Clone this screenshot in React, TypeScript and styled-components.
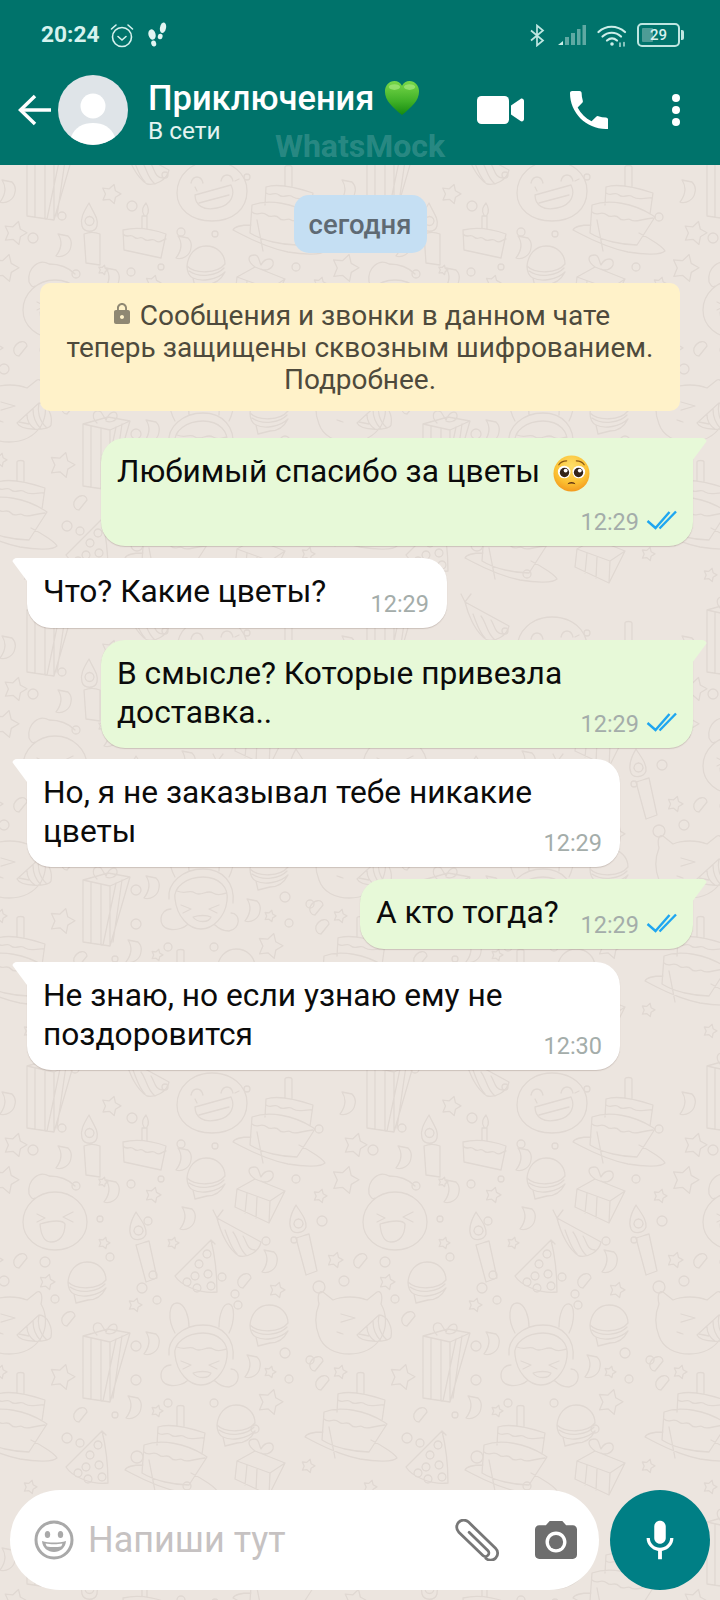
import { Fragment } from 'react';
import styled, { createGlobalStyle } from 'styled-components';

const GlobalStyle = createGlobalStyle`
  html, body {
    margin: 0;
    padding: 0;
    background: #ece5df;
  }
  body {
    font-family: Roboto, "Liberation Sans", sans-serif;
  }
`;

const Screen = styled.div`
  width: 720px;
  height: 1600px;
  display: flex;
  flex-direction: column;
  overflow: hidden;
`;

const Header = styled.header`
  position: relative;
  height: 165px;
  flex: none;
  background: #00736b;
  color: #fff;
`;

const StatusBar = styled.div`
  height: 70px;
  display: flex;
  align-items: center;
  padding: 0 40px 0 41px;
  color: #d6f2ee;
`;

const Clock = styled.span`
  font-size: 22.700px;
  font-weight: 700;
  line-height: 1;
  margin-right: 11px;
`;

const StatusRight = styled.div`
  margin-left: auto;
  display: flex;
  align-items: center;
  gap: 11px;
`;

const NavBar = styled.div`
  height: 80px;
  display: flex;
  align-items: center;
  padding-left: 18px;
`;

const Titles = styled.div`
  margin-left: 20px;
  display: flex;
  flex-direction: column;
  margin-top: 3px;
`;

const Title = styled.div`
  font-size: 34.500px;
  font-weight: 500;
  line-height: 38px;
  white-space: nowrap;
  display: flex;
  align-items: center;
  gap: 10px;
`;

const Subtitle = styled.div`
  font-size: 24.400px;
  line-height: 28px;
  color: #e4f3f1;
`;

const NavActions = styled.div`
  margin-left: auto;
  display: flex;
  align-items: center;
  padding-right: 40px;
  gap: 46px;
`;

const Dots = styled.div`
  display: flex;
  flex-direction: column;
  gap: 4px;
  margin-left: 18px;

  i {
    display: block;
    width: 8px;
    height: 8px;
    border-radius: 50%;
    background: #fff;
  }
`;

const Watermark = styled.div`
  position: absolute;
  left: 50%;
  top: 128px;
  transform: translateX(-50%);
  font-size: 32px;
  font-weight: 700;
  line-height: 36px;
  color: rgba(255, 255, 255, 0.18);
  white-space: nowrap;
`;

const Chat = styled.main`
  position: relative;
  flex: 1;
  display: flex;
  flex-direction: column;
  background: #ece5df;
`;

const Wallpaper = styled.svg`
  position: absolute;
  inset: 0;
  width: 100%;
  height: 100%;
`;

const DoodleLayer = styled.g`
  fill: none;
  stroke: #e0d8d2;
  stroke-width: 1.300;
  stroke-linejoin: round;
  stroke-linecap: round;
`;

const Messages = styled.div`
  position: relative;
  flex: 1;
  display: flex;
  flex-direction: column;
  padding: 30px 27px 0;
`;

const DayPill = styled.div`
  align-self: center;
  width: 133px;
  height: 58px;
  display: flex;
  align-items: center;
  justify-content: center;
  border-radius: 15px;
  background: #c5dff3;
  color: #5f6a73;
  font-size: 27.500px;
  font-weight: 500;
`;

const Notice = styled.div`
  margin: 30px 13px 27px;
  padding-top: 17px;
  height: 128px;
  box-sizing: border-box;
  border-radius: 10px;
  background: #fff2c9;
  color: #4e4a3c;
  font-size: 28px;
  line-height: 32px;
  text-align: center;
  white-space: nowrap;
`;

const LockIcon = styled.svg`
  width: 24px;
  height: 24px;
  fill: #8f8873;
  vertical-align: -1px;
  margin-right: 6px;
`;

const Bubble = styled.div<{ $out?: boolean; $width: number; $gap: number }>`
  position: relative;
  box-sizing: border-box;
  width: ${(p) => p.$width}px;
  align-self: ${(p) => (p.$out ? 'flex-end' : 'flex-start')};
  margin-bottom: ${(p) => p.$gap}px;
  padding: 15px ${(p) => (p.$out ? 16 : 18)}px 10px 16px;
  display: flex;
  flex-wrap: wrap;
  justify-content: space-between;
  align-items: flex-end;
  gap: 10.500px 8px;
  background: ${(p) => (p.$out ? '#e7f9d8' : '#fff')};
  border-radius: ${(p) => (p.$out ? '24px 0 24px 24px' : '0 24px 24px 24px')};
  box-shadow: 0 1px 1px rgba(90, 70, 60, 0.22);

  &::before {
    content: '';
    position: absolute;
    top: 0;
    ${(p) => (p.$out ? 'right: -14px;' : 'left: -15px;')}
    width: 15px;
    height: 23px;
    background: inherit;
    border-radius: ${(p) => (p.$out ? '0 5px 0 0' : '5px 0 0 0')};
    clip-path: ${(p) =>
      p.$out
        ? 'polygon(0 0, 100% 0, 100% 12%, 0 100%)'
        : 'polygon(0 0, 100% 0, 100% 100%, 0 12%)'};
  }
`;

const BubbleText = styled.div`
  font-size: 31.700px;
  line-height: 38.500px;
  color: #0b0b0b;
  margin-bottom: 6px;
`;

const Meta = styled.div`
  margin-left: auto;
  height: 28px;
  display: flex;
  align-items: center;
  gap: 7px;
  font-size: 23.500px;
  color: #a4adaa;
  white-space: nowrap;
`;

const EmojiSvg = styled.svg`
  width: 37px;
  height: 37px;
  display: inline-block;
  vertical-align: middle;
  margin: -6px 0 -6px 13px;
`;

const TicksSvg = styled.svg`
  margin-top: -4px;
`;

const Composer = styled.div`
  position: relative;
  flex: none;
  display: flex;
  gap: 11px;
  padding: 0 10px 10px;
`;

const InputBox = styled.div`
  flex: 1;
  height: 100px;
  display: flex;
  align-items: center;
  padding: 0 22px 0 24px;
  background: #fff;
  border-radius: 50px;
`;

const Placeholder = styled.span`
  margin-left: 14px;
  font-size: 36px;
  color: #c6c2c2;
`;

const InputIcons = styled.div`
  margin-left: auto;
  display: flex;
  align-items: center;
  gap: 35px;
`;

const MicButton = styled.div`
  width: 100px;
  height: 100px;
  flex: none;
  display: flex;
  align-items: center;
  justify-content: center;
  border-radius: 50%;
  background: #007f85;
`;

const StepsSvg = styled.svg`
  margin-left: 12px;
`;

const BluetoothSvg = styled.svg`
  margin-right: 2px;
`;

const WifiSvg = styled.svg`
  margin-right: -2px;
`;

const AvatarSvg = styled.svg`
  margin-left: 7px;
  flex: none;
`;

const SmileSvg = styled.svg`
  flex: none;
`;

/* status bar icons */
const AlarmIcon = () => (
  <svg width="24" height="25" viewBox="0 0 24 25" fill="none" stroke="#d6f2ee" strokeWidth="1.600" strokeLinecap="round">
    <circle cx="12" cy="14" r="9.500" />
    <path d="M8 13.500l4 3.500 4-3.500" />
    <path d="M1.500 6L6 2M22.500 6L18 2" />
  </svg>
);

const StepsIcon = () => (
  <StepsSvg width="22" height="26" viewBox="0 0 22 26" fill="#e3f5f2">
    <ellipse cx="6" cy="12.500" rx="3.600" ry="5.200" transform="rotate(-14 6 12.500)" />
    <ellipse cx="7.700" cy="21.500" rx="2.500" ry="3" transform="rotate(-14 7.700 21.500)" />
    <ellipse cx="17" cy="5.800" rx="3" ry="5.400" transform="rotate(12 17 5.800)" />
    <ellipse cx="14.200" cy="14.500" rx="2.400" ry="2.800" transform="rotate(12 14.200 14.500)" />
  </StepsSvg>
);

const BluetoothIcon = () => (
  <BluetoothSvg width="15" height="23" viewBox="0 0 15 23" fill="none" stroke="#bfe6e1" strokeWidth="1.700">
    <path d="M1 6.500l12 10-6 5V1.500l6 5-12 10" />
  </BluetoothSvg>
);

const SignalIcon = () => (
  <svg width="28" height="20" viewBox="0 0 28 20" fill="#5fa9a3">
    <path d="M0 20l5-4v4z" fill="#cdeee9" />
    <rect x="7" y="12" width="4" height="8" />
    <rect x="13" y="8" width="4" height="12" />
    <rect x="19" y="4" width="3.500" height="16" />
    <rect x="24.500" y="0" width="3.500" height="20" />
  </svg>
);

const WifiIcon = () => (
  <WifiSvg width="30" height="23" viewBox="0 0 30 23" fill="none" stroke="#cdeee9" strokeWidth="2.200" strokeLinecap="round">
    <path d="M1.500 8C9 1 20 1 28 8" />
    <path d="M5.500 12.500C11 7.500 18.500 7.500 24 12.500" />
    <path d="M10 16.500c3-2.500 7-2.500 10 0" />
    <circle cx="15" cy="20" r="1.800" fill="#cdeee9" stroke="none" />
    <path d="M23 19v3.500M27 18.500V22" strokeWidth="1.300" />
  </WifiSvg>
);

const BatteryBox = styled.div`
  position: relative;
  width: 39px;
  height: 20px;
  display: flex;
  align-items: center;
  justify-content: center;
  border: 2px solid #bfe6e1;
  border-radius: 5px;
  font-size: 15px;
  font-weight: 500;
  line-height: 1;
  color: #d7f1ee;
  margin-left: 1px;

  &::before {
    content: '';
    position: absolute;
    left: 3px;
    top: 3px;
    bottom: 3px;
    width: 11px;
    background: #4d9c96;
    border-radius: 1px;
  }

  &::after {
    content: '';
    position: absolute;
    right: -6px;
    top: 5px;
    width: 3px;
    height: 10px;
    background: #bfe6e1;
    border-radius: 0 2px 2px 0;
  }

  span {
    position: relative;
  }
`;

/* nav icons */
const BackArrow = () => (
  <svg width="33" height="32" viewBox="0 0 33 32" fill="none" stroke="#fff" strokeWidth="3.500">
    <path d="M33 16H3" />
    <path d="M17 2L2.500 16 17 30" />
  </svg>
);

const AvatarIcon = () => (
  <AvatarSvg width="70" height="70" viewBox="0 0 70 70">
    <circle cx="35" cy="35" r="35" fill="#dfe4e8" />
    <circle cx="35" cy="31" r="12.500" fill="#fff" />
    <path d="M13 62C17 52 25 48 35 48s18 4 22 14A35 35 0 0 1 13 62z" fill="#fff" />
  </AvatarSvg>
);

const HeartEmoji = () => (
  <svg width="36" height="36" viewBox="0 0 38 38">
    <defs>
      <linearGradient id="heartFill" x1="0" y1="0" x2="0" y2="1">
        <stop offset="0" stopColor="#79d84a" />
        <stop offset="0.600" stopColor="#3fb027" />
        <stop offset="1" stopColor="#158a10" />
      </linearGradient>
    </defs>
    <path d="M19 37C9 29 1 22 1 12 1 5.500 5.500 1 11 1c3.500 0 6.500 2 8 5 1.500-3 4.500-5 8-5 5.500 0 10 4.500 10 11 0 10-8 17-18 25z" fill="url(#heartFill)" />
    <ellipse cx="11" cy="7.500" rx="6" ry="3" fill="#a7e87f" opacity="0.700" />
    <ellipse cx="27" cy="7.500" rx="6" ry="3" fill="#a7e87f" opacity="0.700" />
  </svg>
);

const VideoIcon = () => (
  <svg width="47" height="28" viewBox="0 0 47 28" fill="#fff">
    <rect x="0" y="0" width="32" height="28" rx="4.500" />
    <path d="M34 9.500L43.500 3c1.500-1 3.500 0 3.500 2v18c0 2-2 3-3.500 2L34 18.500z" />
  </svg>
);

const PhoneIcon = () => (
  <svg width="38" height="38" viewBox="3 3 18 18" fill="#fff">
    <path d="M6.620 10.790c1.440 2.830 3.760 5.140 6.590 6.590l2.200-2.200c.27-.27.67-.36 1.020-.24 1.120.37 2.330.57 3.570.57.55 0 1 .45 1 1V21c-.2 0-.5 0-1 0-9.390 0-17-7.610-17-17 0-.55.45-1 1-1h3.500c.55 0 1 .45 1 1 0 1.250.2 2.450.57 3.570.11.35.03.74-.25 1.020l-2.200 2.200z" />
  </svg>
);

/* message bits */
const Ticks = () => (
  <TicksSvg width="31" height="20" viewBox="0 0 31 20" fill="none" stroke="#1fa6f0" strokeWidth="2.400">
    <path d="M1.500 11l8 7L23.500 2" />
    <path d="M13.500 18.500L30 1.500" />
  </TicksSvg>
);

const PleadingEmoji = () => (
  <EmojiSvg viewBox="0 0 38 38">
    <defs>
      <radialGradient id="faceFill" cx="0.500" cy="0.300" r="0.800">
        <stop offset="0" stopColor="#fedf6a" />
        <stop offset="0.600" stopColor="#fbbf31" />
        <stop offset="1" stopColor="#f08a16" />
      </radialGradient>
    </defs>
    <circle cx="19" cy="19" r="18.500" fill="url(#faceFill)" />
    <path d="M6 10c2-3 5-4 8-4M32 10c-2-3-5-4-8-4" fill="none" stroke="#8c5a14" strokeWidth="1.300" strokeLinecap="round" />
    <circle cx="11.500" cy="17.500" r="6.500" fill="#fff" />
    <circle cx="26.500" cy="17.500" r="6.500" fill="#fff" />
    <circle cx="11.800" cy="18" r="4.800" fill="#33241a" />
    <circle cx="26.200" cy="18" r="4.800" fill="#33241a" />
    <circle cx="13" cy="16" r="2" fill="#fff" />
    <circle cx="27.500" cy="16" r="2" fill="#fff" />
    <path d="M15 30c1-3 7-3 8 0-2-1-6-1-8 0z" fill="#5b2f12" />
  </EmojiSvg>
);

/* composer icons */
const SmileIcon = () => (
  <SmileSvg width="40" height="40" viewBox="0 0 40 40">
    <circle cx="20" cy="20" r="18" fill="none" stroke="#a9a9a9" strokeWidth="3" />
    <ellipse cx="13.500" cy="14.500" rx="2.700" ry="3.500" fill="#a9a9a9" />
    <ellipse cx="26.500" cy="14.500" rx="2.700" ry="3.500" fill="#a9a9a9" />
    <path d="M8 21c7 2 17 2 24 0-.5 7-6 11-12 11S8.500 28 8 21z" fill="#a9a9a9" />
    <path d="M11.500 23.500c5 1 12 1 17 0-.5 1.500-1 2.500-1.500 3-4 .7-10 .7-14 0-.5-.5-1-1.500-1.500-3z" fill="#fff" />
  </SmileSvg>
);

const ClipIcon = () => (
  <svg width="46" height="42" viewBox="0 0 46 42" fill="none" stroke="#777" strokeWidth="2.800" strokeLinecap="round">
    <g transform="rotate(44 23 21)">
      <path d="M12 21H38a3.500 3.500 0 0 1 0 7H4.500a7 7 0 0 1 0-14H42a7 7 0 0 1 0 14" />
    </g>
  </svg>
);

const CameraIcon = () => (
  <svg width="42" height="38" viewBox="2 2 20 18" fill="#6e6e6e">
    <path d="M9 2L7.170 4H4c-1.100 0-2 .9-2 2v12c0 1.100.9 2 2 2h16c1.100 0 2-.9 2-2V6c0-1.100-.9-2-2-2h-3.170L15 2H9zm3 15c-2.760 0-5-2.240-5-5s2.240-5 5-5 5 2.240 5 5-2.240 5-5 5z" />
    <circle cx="12" cy="12" r="3.400" />
  </svg>
);

const MicIcon = () => (
  <svg width="46" height="46" viewBox="0 0 24 24" fill="#fff">
    <path d="M12 14c1.660 0 3-1.340 3-3V5c0-1.660-1.340-3-3-3S9 3.340 9 5v6c0 1.660 1.340 3 3 3zm5.300-3c0 3-2.540 5.100-5.300 5.100S6.700 14 6.700 11H5c0 3.410 2.720 6.230 6 6.720V22h2v-4.280c3.280-.48 6-3.300 6-6.720h-1.700z" />
  </svg>
);

/* wallpaper doodles, each drawn from its own top-left corner */
const doodlePaths: Record<string, string> = {
  giftTall:
    'M0 16V78L27 82L47 13L25 9L0 16L27 22V82M27 22L47 13M8 18V79M18 20V81M33 19L20 81M39 16L30 78M14 15C7 8 11 0 18 4L23 12C27 2 35 2 34 9C33 13 27 15 23 13',
  candle:
    'M9 0C3 10 0 16 2 23C4 30 15 30 17 23C19 16 13 9 9 0ZM9.500 13.500a4.500 4.500 0 1 0 .01 0M4 31L6 60L20 62L20 31C15 29 9 29 4 31Z',
  candleTilt:
    'M8 0C2 10 0 17 3 24C6 30 16 28 18 22C19 15 13 8 8 0ZM10.500 14a4.500 4.500 0 1 0 .01 0M8 33L18 70L29 66L21 29C17 30 12 32 8 33Z',
  smallCake:
    'M1 27L2 47L39 55L44 31C30 26 14 24 1 27ZM1 31C5 36 8 30 12 34C16 38 18 32 22 36C26 40 30 34 34 38C38 41 41 36 44 36M20 25V13L25 13V26M22 12C19 7 21 4 24 0C27 5 27 9 25 12',
  bigCake:
    'M24 55L30 86M0 65C10 70 30 82 55 87C72 90 88 90 92 86C90 82 78 74 66 68M18 60C10 60 2 61 0 65M19 40L17 68C30 76 50 80 64 80L82 52L79 50C60 38 36 34 19 40ZM19 47C24 52 28 45 34 50C38 54 42 48 46 53C50 58 54 52 58 55C62 58 68 54 80 53M33 22L32 40M33 22C45 18 62 22 80 28L77 49M33 28C38 32 42 26 46 30C50 34 56 28 60 32C66 36 72 32 79 33M52 20V2C52 0 59 0 59 2V21',
  face:
    'M35 0C15 0 0 14 0 32C0 48 14 60 35 60C56 60 70 48 70 30C70 12 54 0 35 0ZM14 22C16 14 24 14 26 22M44 20C46 12 54 12 56 20M18 34L54 24C58 32 56 44 40 47C26 50 18 44 18 34ZM22 42L52 34M20 30L18 26M58 20L62 18',
  partyFace:
    'M32 22C14 22 0 36 0 52C0 68 14 80 32 80C50 80 64 68 64 52C64 36 50 22 32 22ZM6 24C4 10 16 0 26 6C36 6 46 10 52 16M6 24C8 28 10 30 12 28M14 44L22 48L14 52M50 42L40 47L50 52M17 54C30 50 40 50 42 54C42 66 36 72 28 72C22 72 18 66 17 54Z',
  burger:
    'M19 0C8 0 1 9 0 20C8 28 30 28 38 18C38 8 30 0 19 0ZM0 20C0 26 2 30 6 32C14 36 30 34 38 26M6 32L8 41L20 38C28 38 34 34 38 26M2 25C12 32 30 30 37 22',
  giftBox:
    'M2 16L0 34L34 50L50 18L20 6L2 16L35 28L34 50M35 28L50 18M12 20L10 40M22 24L21 45M20 6C12 0 12 -6 20 -6C24 -6 24 0 26 4C30 -4 40 -4 38 4C36 9 30 10 26 8',
  hatStriped:
    'M0 8L44 32C42 42 30 48 22 46C12 40 4 24 0 8ZM8 20C12 30 14 38 20 44M16 22C22 30 22 40 30 46M26 26C30 32 30 40 38 40M0 8L-4 0M0 8L6 0',
  pizzaHat:
    'M36 0L0 36C6 46 26 54 42 52C42 36 40 16 36 0ZM36 0L40 4M12 38a4 4 0 1 0 .01 0M24 20a4 4 0 1 0 .01 0M32 10a4 4 0 1 0 .01 0M20 32a4 4 0 1 0 .01 0M33 30a4 4 0 1 0 .01 0M22 44a4 4 0 1 0 .01 0M36 42a4 4 0 1 0 .01 0',
  bunny:
    'M18 30C10 16 12 0 20 0C28 0 32 14 32 24M62 24C62 12 66 0 72 1C78 2 78 18 72 30M12 52C10 36 26 22 46 22C66 22 78 36 76 56M18 52C16 40 30 30 46 30C62 30 72 40 70 54C68 70 56 82 44 82C32 82 20 70 18 52ZM20 44C30 48 32 42 38 46C44 50 50 42 56 46C62 50 66 46 70 46M24 58L34 62L26 66M62 58L52 62L60 66M36 70C42 68 50 68 54 70C52 76 40 76 36 70ZM14 62C2 62 0 80 12 82C20 84 28 80 30 78M74 66C84 66 84 82 72 84C66 84 62 82 58 78',
  cat:
    'M4 14C2 6 4 0 8 2L18 10C28 6 42 6 52 10L62 2C66 0 68 6 66 14C72 24 72 38 66 48C58 60 46 64 34 64C20 64 8 58 4 46C0 36 0 24 4 14ZM26 24L40 28L26 32M44 44L54 46M22 42L28 44',
  horn:
    'M0 22L22 2C30 2 36 14 34 24C32 30 4 30 0 22ZM22 2C20 10 22 20 30 27M10 14C10 18 12 24 18 28M16 8C16 14 18 22 24 28',
  confetti: 'M2 0C6 6 6 14 0 22C6 24 14 20 15 12C16 8 14 4 12 2L2 0Z',
  ribbon: 'M0 8C4 0 12 0 13 6L5 16C1 16 -1 12 0 8Z',
};

const starPath = (r: number) => {
  let d = '';
  for (let i = 0; i < 10; i++) {
    const rad = i % 2 === 0 ? r : r * 0.55;
    const a = (Math.PI / 5) * i - Math.PI / 2 + 0.3;
    d += `${i === 0 ? 'M' : 'L'}${(Math.cos(a) * rad).toFixed(1)} ${(Math.sin(a) * rad).toFixed(1)}`;
  }
  return d + 'Z';
};

// page positions, measured on the band y 1060..1516; the tile is 340x456
const BAND_TOP = 1077;
const doodles: [string, number, number][] = [
  ['giftTall', 27, 1050], ['face', 177, 1073], ['bigCake', 233, 1077], ['candle', 80, 1115],
  ['smallCake', 122, 1115], ['hatStriped', 125, 1050], ['burger', 187, 1158], ['giftBox', 235, 1173],
  ['partyFace', 23, 1170], ['candleTilt', 128, 1212], ['hatStriped', 217, 1210], ['candleTilt', 288, 1205],
  ['pizzaHat', 175, 1240], ['burger', 68, 1262], ['bunny', 157, 1303], ['burger', 250, 1305],
  ['cat', 315, 1290], ['horn', 17, 1313], ['giftTall', 83, 1320], ['bigCake', -35, 1372],
  ['pizzaHat', 66, 1431], ['bigCake', 125, 1405], ['giftBox', 235, 1445], ['burger', 217, 1405],
  ['confetti', 56, 1146], ['confetti', 176, 1148], ['confetti', 340, 1092], ['confetti', 104, 1180],
  ['confetti', 180, 1207], ['ribbon', 14, 1252], ['confetti', 262, 1250], ['ribbon', 238, 1272],
  ['ribbon', 62, 1310], ['confetti', 144, 1332], ['ribbon', 74, 1406], ['confetti', 126, 1396],
  ['confetti', 245, 1355], ['ribbon', 310, 1355], ['ribbon', 316, 1374],
];
const stars: [number, number, number][] = [
  [111, 1106, 10], [15, 1145, 12], [153, 1195, 8], [345, 1180, 14], [320, 1196, 7], [47, 1282, 8],
  [277, 1290, 8], [335, 1260, 8], [135, 1305, 7], [103, 1182, 5], [173, 1243, 6], [104, 1243, 6],
  [62, 1377, 13], [270, 1402, 13], [157, 1411, 6], [308, 1466, 7], [30, 1487, 7], [270, 1372, 6], [340, 1372, 7],
];
const dots: [number, number, number][] = [
  [75, 1069, 4], [62, 1128, 4], [132, 1118, 5], [165, 1087, 3], [247, 1089, 3], [319, 1129, 4],
  [33, 1150, 5], [181, 1144, 4], [215, 1146, 3], [131, 1184, 4], [161, 1179, 3], [296, 1179, 4],
  [76, 1186, 4], [148, 1221, 4], [100, 1219, 3], [322, 1221, 5], [266, 1241, 4], [153, 1275, 4],
  [222, 1277, 4], [110, 1257, 4], [45, 1262, 5], [319, 1287, 6], [294, 1240, 3], [142, 1288, 5],
  [55, 1299, 4], [235, 1294, 4], [344, 1281, 5], [136, 1346, 5], [238, 1305, 4], [285, 1353, 5],
  [289, 1379, 4], [136, 1380, 5], [168, 1403, 4], [214, 1403, 4], [255, 1429, 4], [67, 1438, 5],
  [80, 1443, 4], [137, 1457, 6], [187, 1486, 4], [310, 1360, 4], [115, 1415, 3], [157, 1300, 4],
];

const DoodleBand = () => (
  <>
    {doodles.map(([kind, x, y], i) => (
      <path key={`d${i}`} d={doodlePaths[kind]} transform={`translate(${x} ${y - BAND_TOP})`} />
    ))}
    {stars.map(([x, y, r], i) => (
      <path key={`s${i}`} d={starPath(r)} transform={`translate(${x} ${y - BAND_TOP})`} />
    ))}
    {dots.map(([x, y, r], i) => (
      <circle key={`c${i}`} cx={x} cy={y - BAND_TOP} r={r} />
    ))}
  </>
);

const tileOffsets = [-340, 0, 340].flatMap((dx) => [-456, 0, 456].map((dy) => [dx, dy]));

const ChatWallpaper = () => (
  <Wallpaper aria-hidden="true">
    <defs>
      <pattern id="doodles" width="340" height="456" patternUnits="userSpaceOnUse">
        <DoodleLayer>
          {tileOffsets.map(([dx, dy]) => (
            <g key={`${dx}:${dy}`} transform={`translate(${dx} ${dy})`}>
              <DoodleBand />
            </g>
          ))}
        </DoodleLayer>
      </pattern>
    </defs>
    <rect width="100%" height="100%" fill="url(#doodles)" />
  </Wallpaper>
);

type Msg = { out?: boolean; width: number; gap: number; text: string[]; time: string; emoji?: boolean };

const messages: Msg[] = [
  { out: true, width: 592, gap: 12, text: ['Любимый спасибо за цветы'], time: '12:29', emoji: true },
  { width: 420, gap: 12.5, text: ['Что? Какие цветы?'], time: '12:29' },
  { out: true, width: 592, gap: 11, text: ['В смысле? Которые привезла', 'доставка..'], time: '12:29' },
  { width: 593, gap: 12, text: ['Но, я не заказывал тебе никакие', 'цветы'], time: '12:29' },
  { out: true, width: 333, gap: 13.5, text: ['А кто тогда?'], time: '12:29' },
  { width: 593, gap: 0, text: ['Не знаю, но если узнаю ему не', 'поздоровится'], time: '12:30' },
];

const App = () => {
  return (
    <Screen>
      <GlobalStyle />
      <Header>
        <StatusBar>
          <Clock>20:24</Clock>
          <AlarmIcon />
          <StepsIcon />
          <StatusRight>
            <BluetoothIcon />
            <SignalIcon />
            <WifiIcon />
            <BatteryBox>
              <span>29</span>
            </BatteryBox>
          </StatusRight>
        </StatusBar>
        <NavBar>
          <BackArrow />
          <AvatarIcon />
          <Titles>
            <Title>
              Приключения
              <HeartEmoji />
            </Title>
            <Subtitle>В сети</Subtitle>
          </Titles>
          <NavActions>
            <VideoIcon />
            <PhoneIcon />
            <Dots>
              <i />
              <i />
              <i />
            </Dots>
          </NavActions>
        </NavBar>
        <Watermark>WhatsMock</Watermark>
      </Header>
      <Chat>
        <ChatWallpaper />
        <Messages>
          <DayPill>сегодня</DayPill>
          <Notice>
            <LockIcon viewBox="0 0 24 24">
              <path d="M18 8h-1V6c0-2.760-2.240-5-5-5S7 3.240 7 6v2H6c-1.100 0-2 .9-2 2v10c0 1.100.9 2 2 2h12c1.100 0 2-.9 2-2V10c0-1.100-.9-2-2-2zm-6 9c-1.100 0-2-.9-2-2s.9-2 2-2 2 .9 2 2-.9 2-2 2zm3.100-9H8.900V6c0-1.710 1.390-3.100 3.100-3.100s3.100 1.390 3.100 3.100v2z" />
            </LockIcon>
            Сообщения и звонки в данном чате
            <br />
            теперь защищены сквозным шифрованием.
            <br />
            Подробнее.
          </Notice>
          {messages.map((m) => (
            <Bubble key={m.text[0]} $out={m.out} $width={m.width} $gap={m.gap}>
              <BubbleText>
                {m.text.map((line, i) => (
                  <Fragment key={line}>
                    {i > 0 && <br />}
                    {line}
                  </Fragment>
                ))}
                {m.emoji && <PleadingEmoji />}
              </BubbleText>
              <Meta>
                {m.time}
                {m.out && <Ticks />}
              </Meta>
            </Bubble>
          ))}
        </Messages>
        <Composer>
          <InputBox>
            <SmileIcon />
            <Placeholder>Напиши тут</Placeholder>
            <InputIcons>
              <ClipIcon />
              <CameraIcon />
            </InputIcons>
          </InputBox>
          <MicButton>
            <MicIcon />
          </MicButton>
        </Composer>
      </Chat>
    </Screen>
  );
};

export default App;
